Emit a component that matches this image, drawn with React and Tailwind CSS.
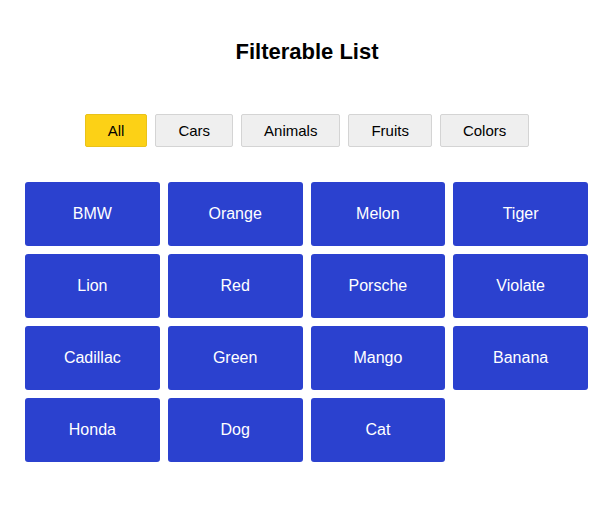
import React, { useState } from "react";

const items = [
  { name: "BMW", category: "cars" },
  { name: "Orange", category: "fruits" },
  { name: "Melon", category: "fruits" },
  { name: "Tiger", category: "animals" },
  { name: "Lion", category: "animals" },
  { name: "Red", category: "colors" },
  { name: "Porsche", category: "cars" },
  { name: "Violate", category: "colors" },
  { name: "Cadillac", category: "cars" },
  { name: "Green", category: "colors" },
  { name: "Mango", category: "fruits" },
  { name: "Banana", category: "fruits" },
  { name: "Honda", category: "cars" },
  { name: "Dog", category: "animals" },
  { name: "Cat", category: "animals" },
];

const filters = [
  { key: "all", label: "All" },
  { key: "cars", label: "Cars" },
  { key: "animals", label: "Animals" },
  { key: "fruits", label: "Fruits" },
  { key: "colors", label: "Colors" },
];

const App = () => {
  const [active, setActive] = useState("all");

  const shown = active === "all" ? items : items.filter((i) => i.category === active);

  return (
    <div
      className="min-h-screen bg-white pt-[39px] pl-[26px] pr-[23px] text-black"
      style={{ fontFamily: '"Liberation Sans", Arial, sans-serif' }}
    >
      <h2 className="text-center text-[22px] font-bold leading-[25px]">
        Filterable List
      </h2>

      <div className="mt-[50px] flex justify-center gap-2">
        {filters.map((f) => (
          <button
            key={f.key}
            onClick={() => setActive(f.key)}
            className={
              active === f.key
                ? "rounded-[2px] border border-[#e9c21a] bg-[#fcd116] px-[22px] py-[7px] text-[15px] leading-[17px] text-black"
                : "rounded-[2px] border border-[#d4d4d4] bg-[#efefef] px-[22px] py-[7px] text-[15px] leading-[17px] text-black"
            }
          >
            {f.label}
          </button>
        ))}
      </div>

      <div className="mt-[35px] -ml-px grid grid-cols-4 gap-2">
        {shown.map((item) => (
          <div
            key={item.name}
            className="flex h-16 items-center justify-center rounded-[3px] bg-[#2b41cf] text-[16px] text-white"
          >
            {item.name}
          </div>
        ))}
      </div>
    </div>
  );
};

export default App;
